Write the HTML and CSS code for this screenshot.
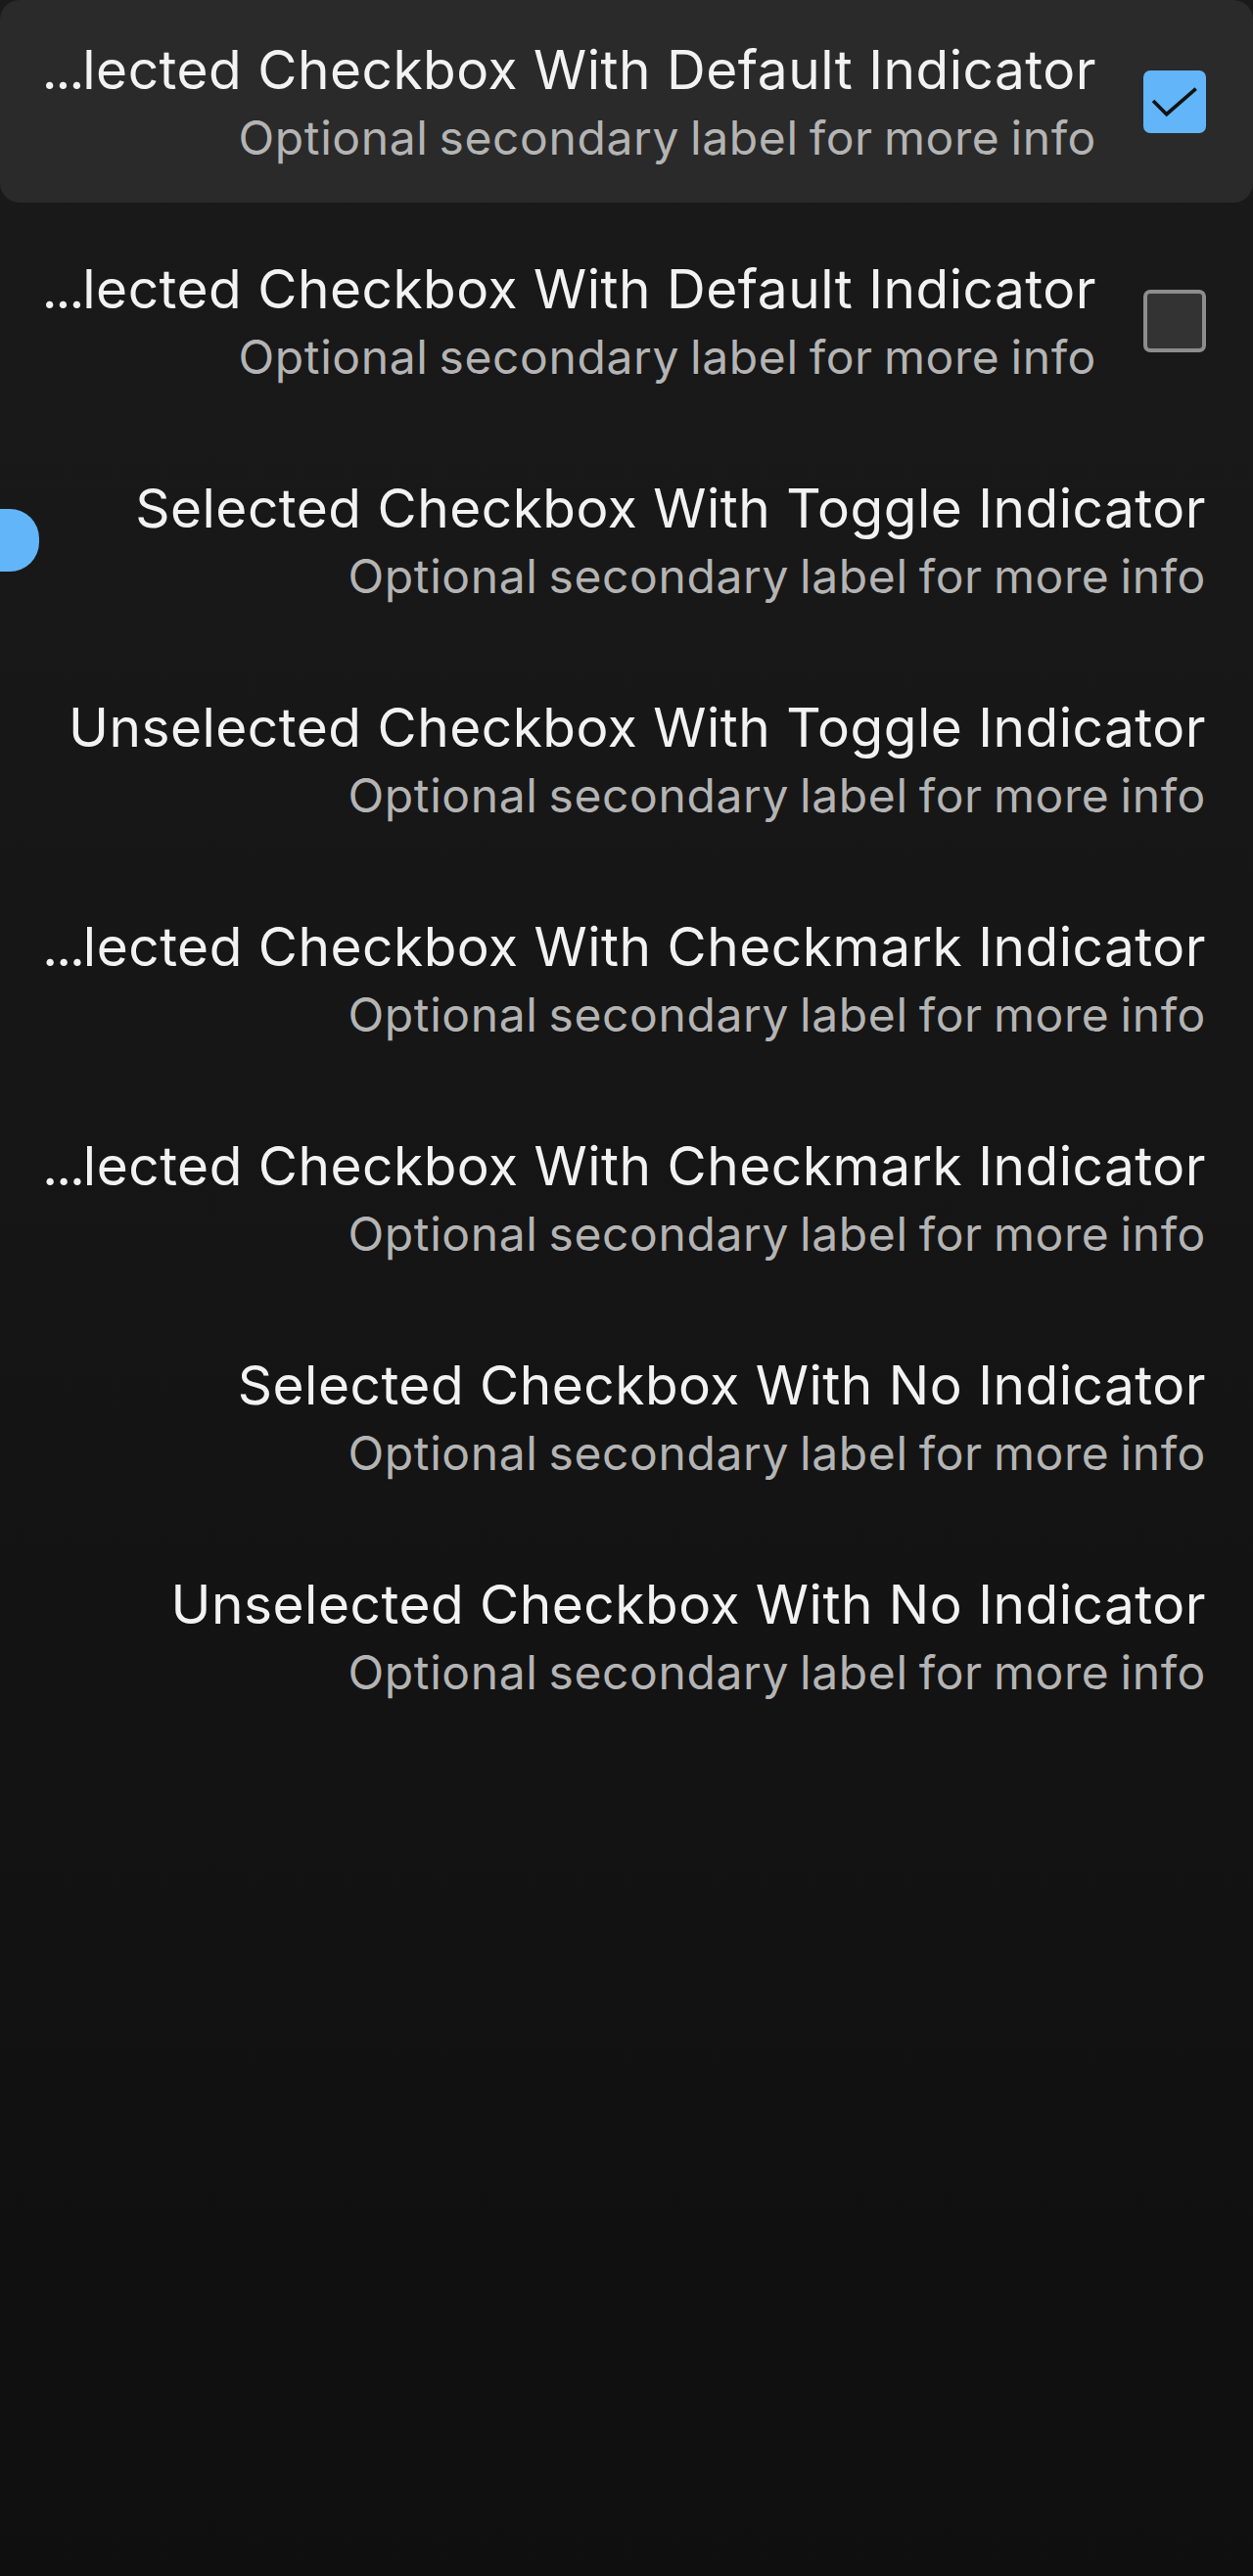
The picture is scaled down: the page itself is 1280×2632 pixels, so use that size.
FILE: index.html
```html
<!DOCTYPE html>
<html lang="en">
<head>
<meta charset="utf-8">
<title>Checkbox list tiles</title>
<link rel="stylesheet" href="styles.css">
</head>
<body>
<main class="list">
  <div class="tile tile--active">
    <div class="text">
      <div class="title"><span class="ell">...</span>lected Checkbox With Default Indicator</div>
      <div class="subtitle">Optional secondary label for more info</div>
    </div>
    <div class="box box--on">
      <svg viewBox="0 0 64 64" width="64" height="64"><path d="M10 31 L23.7 44.7 L53.7 18.7" fill="none" stroke="#121212" stroke-width="3.6" stroke-linecap="butt" stroke-linejoin="miter"/></svg>
    </div>
  </div>
  <div class="tile">
    <div class="text">
      <div class="title"><span class="ell">...</span>lected Checkbox With Default Indicator</div>
      <div class="subtitle">Optional secondary label for more info</div>
    </div>
    <div class="box box--off"></div>
  </div>
  <div class="tile tile--plain">
    <span class="thumb"></span>
    <div class="text">
      <div class="title">Selected Checkbox With Toggle Indicator</div>
      <div class="subtitle">Optional secondary label for more info</div>
    </div>
  </div>
  <div class="tile tile--plain">
    <div class="text">
      <div class="title">Unselected Checkbox With Toggle Indicator</div>
      <div class="subtitle">Optional secondary label for more info</div>
    </div>
  </div>
  <div class="tile tile--plain">
    <div class="text">
      <div class="title"><span class="ell">...</span>lected Checkbox With Checkmark Indicator</div>
      <div class="subtitle">Optional secondary label for more info</div>
    </div>
  </div>
  <div class="tile tile--plain">
    <div class="text">
      <div class="title"><span class="ell">...</span>lected Checkbox With Checkmark Indicator</div>
      <div class="subtitle">Optional secondary label for more info</div>
    </div>
  </div>
  <div class="tile tile--plain">
    <div class="text">
      <div class="title">Selected Checkbox With No Indicator</div>
      <div class="subtitle">Optional secondary label for more info</div>
    </div>
  </div>
  <div class="tile tile--plain">
    <div class="text">
      <div class="title">Unselected Checkbox With No Indicator</div>
      <div class="subtitle">Optional secondary label for more info</div>
    </div>
  </div>
</main>
</body>
</html>
```
FILE: styles.css
```css
html, body {
  margin: 0;
  padding: 0;
}
body {
  width: 1280px;
  min-height: 2632px;
  background: linear-gradient(to bottom, #1a1a1a 0%, #161616 40%, #0f0f0f 100%);
  font-family: Inter, "Noto Sans", sans-serif;
  overflow: hidden;
}
.list {
  display: flex;
  flex-direction: column;
  gap: 17px;
}
.tile {
  position: relative;
  height: 207px;
  display: flex;
  align-items: center;
  justify-content: flex-end;
  gap: 48px;
  padding-right: 48px;
  border-radius: 20px;
}
.tile--active {
  background: #2a2a2a;
}
.text {
  margin-top: 8px;
  text-align: right;
  white-space: nowrap;
}
.title {
  font-size: 55px;
  line-height: 67px;
  letter-spacing: 0.5px;
  color: #f2f2f2;
}
.ell {
  letter-spacing: -2px;
}
.subtitle {
  font-size: 48px;
  line-height: 72px;
  letter-spacing: 0.6px;
  word-spacing: -3px;
  color: #b4b4b4;
}
.box {
  flex: none;
  width: 64px;
  height: 64px;
  box-sizing: border-box;
  border-radius: 7px;
}
.box svg {
  display: block;
}
.box--on {
  background: #62b5f9;
}
.box--off {
  background: #333333;
  border: 4px solid #8d8d8d;
}
.thumb {
  position: absolute;
  left: -30px;
  top: 72px;
  width: 70px;
  height: 64px;
  border-radius: 30px;
  background: #62b5f9;
}
```
